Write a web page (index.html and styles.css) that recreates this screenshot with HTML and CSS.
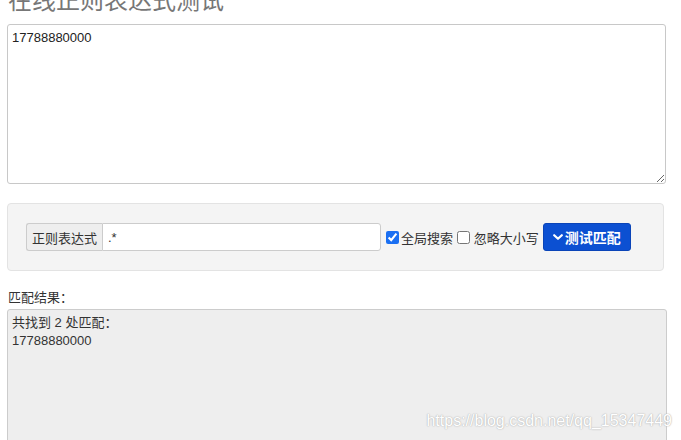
FILE: index.html
```html
<!DOCTYPE html>
<html lang="zh">
<head>
<meta charset="utf-8">
<title>在线正则表达式测试</title>
<link rel="stylesheet" href="styles.css">
</head>
<body>
<div class="page">
  <h1 class="title">在线正则表达式测试</h1>
  <textarea class="source">17788880000</textarea>
  <div class="panel">
    <div class="input-group">
      <span class="addon">正则表达式</span>
      <input class="regex" type="text" value=".*">
    </div>
    <label class="opt"><input type="checkbox" checked>全局搜索</label>
    <label class="opt"><input type="checkbox"> 忽略大小写</label>
    <button class="btn" type="button"><svg class="chev" viewBox="0 0 10 10" width="10" height="10"><path d="M1.2 3.2 L5 6.8 L8.8 3.2" fill="none" stroke="#fff" stroke-width="2.2" stroke-linecap="round" stroke-linejoin="round"/></svg>测试匹配</button>
  </div>
  <div class="result-label">匹配结果：</div>
  <div class="result">
    <div>共找到 2 处匹配：</div>
    <div>17788880000</div>
  </div>
</div>
<div class="watermark">https://blog.csdn.net/qq_15347449</div>
</body>
</html>
```
FILE: styles.css
```css
html, body {
  margin: 0;
  padding: 0;
  overflow: hidden;
  background: #fff;
}
body {
  font-family: "Liberation Sans", "Noto Sans CJK SC", sans-serif;
  font-size: 13px;
  color: #333;
  height: 440px;
  position: relative;
}
.page {
  padding-left: 7px;
  height: 440px;
  overflow: hidden;
  display: flex;
  flex-direction: column;
  align-items: flex-start;
}
.title {
  margin: -12px 0 0 1px;
  font-size: 24px;
  line-height: 26px;
  font-weight: normal;
  color: #777;
  font-family: "Liberation Sans", "Noto Sans CJK SC", sans-serif;
}
.source {
  margin: 10px 0 0 0;
  box-sizing: border-box;
  width: 659px;
  height: 160px;
  border: 1px solid #c8c8c8;
  border-radius: 3px;
  padding: 4px 4px;
  font-family: "Liberation Sans", "Noto Sans CJK SC", sans-serif;
  font-size: 13px;
  line-height: 18px;
  color: #222;
  resize: both;
}
.panel {
  margin-top: 19px;
  box-sizing: border-box;
  width: 657px;
  height: 68px;
  background: #f4f4f4;
  border: 1px solid #e3e3e3;
  border-radius: 4px;
  padding: 19px 18px 0;
  display: flex;
  align-items: flex-start;
}
.input-group {
  display: flex;
  height: 28px;
}
.addon {
  box-sizing: border-box;
  width: 76px;
  height: 28px;
  background: #eee;
  border: 1px solid #ccc;
  border-right: none;
  border-radius: 3px 0 0 3px;
  display: flex;
  align-items: center;
  justify-content: center;
  color: #333;
  font-size: 13px;
}
.regex {
  box-sizing: border-box;
  width: 279px;
  height: 28px;
  margin: 0;
  border: 1px solid #ccc;
  border-radius: 0 3px 3px 0;
  padding: 0 5px;
  font-family: "Liberation Sans", sans-serif;
  font-size: 13px;
  color: #333;
  background: #fff;
}
.opt {
  display: flex;
  align-items: center;
  height: 28px;
  color: #333;
  font-size: 13px;
  white-space: pre;
}
.opt input {
  width: 13px;
  height: 13px;
  margin: 0 2px 0 5px;
  accent-color: #1a6ff2;
}
.opt + .opt input {
  margin-left: 4px;
  margin-right: 0;
}
.btn {
  margin-left: 4px;
  box-sizing: border-box;
  width: 88px;
  height: 28px;
  background: #0c50d2;
  border: 1px solid #0a44b8;
  border-radius: 3px;
  color: #fff;
  font-family: "Liberation Sans", "Noto Sans CJK SC", sans-serif;
  font-size: 14px;
  font-weight: bold;
  display: flex;
  align-items: center;
  justify-content: center;
  gap: 2px;
  padding: 0;
}
.chev {
  display: block;
}
.result-label {
  margin-top: 18px;
  line-height: 18px;
  font-size: 13px;
  color: #333;
  padding-left: 1px;
}
.result {
  margin-top: 2px;
  box-sizing: border-box;
  width: 660px;
  flex: 1 0 auto;
  margin-bottom: -6px;
  background: #eee;
  border: 1px solid #ccc;
  border-radius: 3px 3px 0 0;
  padding: 4px 4px;
  line-height: 18px;
  font-size: 13px;
  color: #333;
}
.watermark {
  position: absolute;
  right: 9px;
  bottom: 10px;
  font-family: "Liberation Sans", sans-serif;
  font-size: 16px;
  color: #fff;
  text-shadow: 0 0 1px #aaa, 0 0 2px #c4c4c4;
}
```
